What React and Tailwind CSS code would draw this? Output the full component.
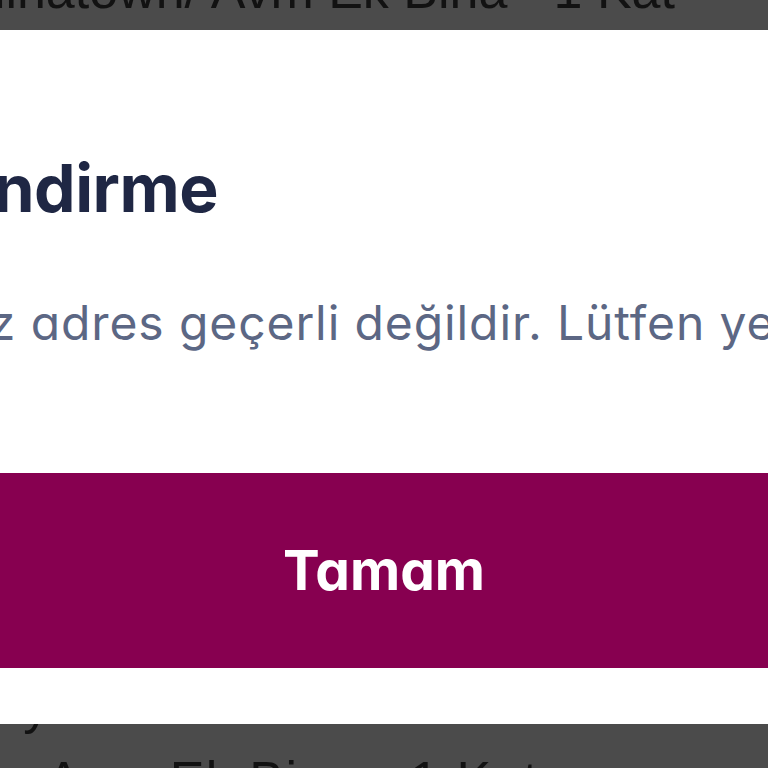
import React from "react";

const BgLine = ({ children, className = "" }) => (
  <div className={`font-['Liberation_Sans',Arial,sans-serif] text-[52px] leading-[60px] text-[#121212] whitespace-nowrap ${className}`}>
    {children}
  </div>
);

const App = () => {
  return (
    <div className="w-[768px] h-[768px] overflow-hidden bg-[#4b4b4b] flex flex-col">
      {/* page behind the dialog (top) */}
      <div className="h-[30px] shrink-0 overflow-hidden">
        <div className="w-[675px] flex justify-end -mt-[40px]">
          <BgLine>Kırmızı Sok. Chinatown/ Avm Ek Bina - 1 Kat</BgLine>
        </div>
      </div>

      {/* dialog */}
      <div className="h-[694px] shrink-0 bg-white overflow-hidden font-['Inter','Noto_Sans',sans-serif] [font-feature-settings:'cv11']">
        <div className="pt-[125px] -ml-[190px] w-[1300px]">
          <div className="w-[408px] flex justify-end">
            <h2 className="text-[66px] leading-[66px] font-bold text-[#1f2744] whitespace-nowrap tracking-[-0.5px]">
              Bilgilendirme
            </h2>
          </div>
          <p className="mt-[78px] -ml-[16px] text-[48px] leading-[48px] tracking-[0.9px] text-[#5c6784] whitespace-nowrap">
            Girdiğiniz adres geçerli değildir. Lütfen yeni bir adres giriniz.
          </p>
        </div>
        <button className="mt-[126px] w-full h-[195px] bg-[#870050] flex items-center justify-center">
          <span className="text-[55px] leading-none font-bold text-white font-['Inter','Noto_Sans',sans-serif]">
            Tamam
          </span>
        </button>
      </div>

      {/* page behind the dialog (bottom) */}
      <div className="flex-1 overflow-hidden">
        <BgLine className="-mt-[49px] -ml-[76px]">Yeniyol Sok. Chinatown/</BgLine>
        <div className="mt-[15px] w-[539px] flex justify-end">
          <BgLine className="tracking-[1.5px]">Chinatown Avm Ek Bina - 1 Kat</BgLine>
        </div>
      </div>
    </div>
  );
};

export default App;
